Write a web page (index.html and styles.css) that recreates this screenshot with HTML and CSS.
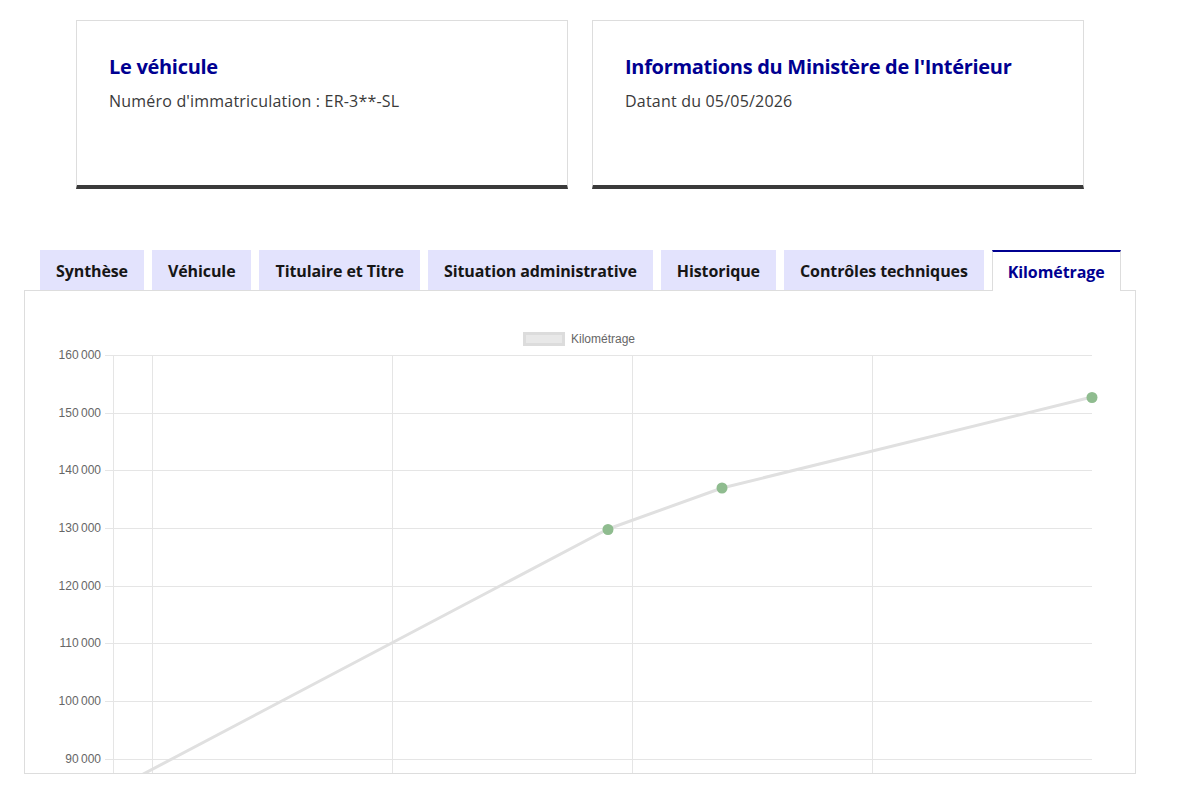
FILE: index.html
```html
<!DOCTYPE html>
<html lang="fr">

<head>
    <meta charset="UTF-8" />
    <meta name="viewport" content="width=device-width, initial-scale=1.0" />
    <title>Historique du véhicule</title>
    <link rel="stylesheet" href="styles.css">
</head>

<body>
    <div class="page">
        <div class="cards">
            <div class="card">
                <h3 class="card-title">Le véhicule</h3>
                <p class="card-desc">Numéro d'immatriculation : ER-3**-SL</p>
            </div>
            <div class="card">
                <h3 class="card-title">Informations du Ministère de l'Intérieur</h3>
                <p class="card-desc">Datant du 05/05/2026</p>
            </div>
        </div>

        <div class="tabs">
            <ul class="tabs-list">
                <li><button class="tab">Synthèse</button></li>
                <li><button class="tab">Véhicule</button></li>
                <li><button class="tab">Titulaire et Titre</button></li>
                <li><button class="tab">Situation administrative</button></li>
                <li><button class="tab">Historique</button></li>
                <li><button class="tab">Contrôles techniques</button></li>
                <li><button class="tab active">Kilométrage</button></li>
            </ul>

            <div class="panel">
                <!-- graphique du kilométrage, coordonnées de la page -->
                <svg class="chart" width="1110" height="482" viewBox="25 291 1110 482">
                    <!-- légende -->
                    <rect x="524.5" y="333.5" width="39" height="11" fill="#e8e8e8" stroke="#dcdcdc" stroke-width="3" />
                    <text class="legend" x="571" y="343">Kilométrage</text>

                    <!-- grille verticale -->
                    <g stroke="#e5e5e5" stroke-width="1">
                        <line x1="113.5" y1="355" x2="113.5" y2="800" />
                        <line x1="152.5" y1="355" x2="152.5" y2="800" />
                        <line x1="392.5" y1="355" x2="392.5" y2="800" />
                        <line x1="632.5" y1="355" x2="632.5" y2="800" />
                        <line x1="872.5" y1="355" x2="872.5" y2="800" />
                    </g>

                    <!-- grille horizontale + graduations -->
                    <g stroke="#e5e5e5" stroke-width="1">
                        <line x1="105" y1="355.5" x2="1092" y2="355.5" />
                        <line x1="105" y1="413.5" x2="1092" y2="413.5" />
                        <line x1="105" y1="470.5" x2="1092" y2="470.5" />
                        <line x1="105" y1="528.5" x2="1092" y2="528.5" />
                        <line x1="105" y1="586.5" x2="1092" y2="586.5" />
                        <line x1="105" y1="643.5" x2="1092" y2="643.5" />
                        <line x1="105" y1="701.5" x2="1092" y2="701.5" />
                        <line x1="105" y1="759.5" x2="1092" y2="759.5" />
                    </g>

                    <g class="ticks">
                        <text x="101" y="356">160&#8239;000</text>
                        <text x="101" y="414">150&#8239;000</text>
                        <text x="101" y="471">140&#8239;000</text>
                        <text x="101" y="529">130&#8239;000</text>
                        <text x="101" y="587">120&#8239;000</text>
                        <text x="101" y="644">110&#8239;000</text>
                        <text x="101" y="702">100&#8239;000</text>
                        <text x="101" y="760">90&#8239;000</text>
                    </g>

                    <!-- série -->
                    <polyline points="113,790 608,529 722,488 1092,397" fill="none" stroke="#e0e0e0" stroke-width="3" stroke-linejoin="round" />
                    <g fill="#8fbc8f">
                        <circle cx="608" cy="529.5" r="5.5" />
                        <circle cx="722" cy="488" r="5.5" />
                        <circle cx="1092" cy="397.5" r="5.5" />
                    </g>
                </svg>
            </div>
        </div>
    </div>
</body>

</html>
```

FILE: styles.css
```css
body {
    margin: 0;
    background: #fff;
    font-family: 'Open Sans', 'Lato', sans-serif;
    color: #3a3a3a;
}

.page {
    width: 1112px;
    padding: 20px 0 0 24px;
}

/* cartes du haut */
.cards {
    display: flex;
    gap: 24px;
    margin: 0 52px;
}

.card {
    width: 492px;
    height: 169px;
    box-sizing: border-box;
    padding: 32px 32px 0;
    border: 1px solid #ddd;
    border-bottom: 4px solid #3a3a3a;
}

.card-title {
    margin: 0 0 8px;
    font-size: 20px;
    line-height: 28px;
    font-weight: 700;
    letter-spacing: -0.3px;
    color: #000091;
}

.card-desc {
    margin: 0;
    font-size: 16px;
    line-height: 24px;
    letter-spacing: 0.2px;
    color: #3a3a3a;
}

/* onglets */
.tabs {
    margin-top: 61px;
}

.tabs-list {
    display: flex;
    gap: 8px;
    margin: 0;
    padding: 0 16px;
    list-style: none;
}

.tabs-list li {
    flex-shrink: 0;
}

.tab {
    position: relative;
    height: 40px;
    padding: 1px 16px 0;
    border: none;
    background: #e3e3fd;
    font-family: inherit;
    font-size: 16px;
    font-weight: 700;
    letter-spacing: -0.1px;
    white-space: nowrap;
    color: #161616;
    cursor: pointer;
}

.tab.active {
    z-index: 1;
    height: 41px;
    margin-bottom: -1px;
    padding: 0 15px;
    background: #fff;
    border-top: 2px solid #000091;
    border-left: 1px solid #ddd;
    border-right: 1px solid #ddd;
    color: #000091;
}

.panel {
    height: 484px;
    box-sizing: border-box;
    border: 1px solid #ddd;
    overflow: hidden;
}

.chart {
    display: block;
}

.chart text {
    font-family: 'Liberation Sans', Arial, sans-serif;
    font-size: 12px;
    fill: #666;
}

.ticks text {
    text-anchor: end;
    dominant-baseline: middle;
}
```
